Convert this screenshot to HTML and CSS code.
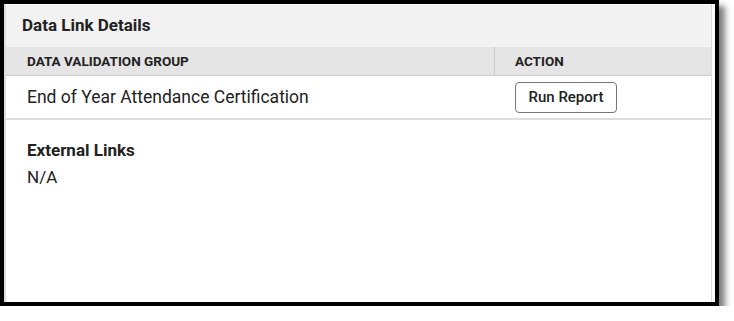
FILE: index.html
```html
<!DOCTYPE html>
<html lang="en">
<head>
  <meta charset="UTF-8" />
  <title>Data Link Details</title>
  <link rel="stylesheet" href="styles.css">
</head>
<body>
  <div class="frame">
    <div class="panel">
      <div class="panel-title">Data Link Details</div>
      <div class="grid-head">
        <div class="col-group">DATA VALIDATION GROUP</div>
        <div class="col-action">ACTION</div>
      </div>
      <div class="grid-row">
        <div class="col-group">End of Year Attendance Certification</div>
        <div class="col-action"><button class="btn">Run Report</button></div>
      </div>
      <div class="links">
        <h3>External Links</h3>
        <p>N/A</p>
      </div>
    </div>
    <div class="edge"></div>
  </div>
</body>
</html>
```

FILE: styles.css
```css
* {
  margin: 0;
  padding: 0;
  box-sizing: border-box;
}
body {
  font-family: Roboto, 'Liberation Sans', sans-serif;
  background: #fff;
  color: #222;
}
.frame {
  width: 719px;
  height: 306px;
  border: 4px solid #000;
  display: flex;
  box-shadow: 6px 6px 6px rgba(0, 0, 0, 0.5);
  background: #fff;
}
.panel {
  flex: 1;
  border-left: 2px solid #ddd;
}
.edge {
  width: 4px;
  border-left: 1px solid #ddd;
}
.panel-title {
  height: 43px;
  border-top: 1px solid #fff;
  background: #f2f2f2;
  padding: 10px 16px 0;
  font-size: 17px;
  font-weight: 700;
}
.grid-head {
  display: flex;
  height: 29px;
  background: #e5e5e5;
  border-bottom: 1px solid #ccc;
  font-size: 13.5px;
  font-weight: 700;
  align-items: stretch;
}
.grid-head .col-group {
  border-right: 1px solid #ccc;
}
.col-group {
  width: 489px;
  padding-left: 21px;
  display: flex;
  align-items: center;
}
.col-action {
  flex: 1;
  padding-left: 20px;
  display: flex;
  align-items: center;
}
.grid-row {
  display: flex;
  height: 44px;
  border-bottom: 2px solid #ddd;
  font-size: 17.5px;
}
.btn {
  font-family: inherit;
  font-size: 15px;
  font-weight: 500;
  color: #222;
  background: #fff;
  border: 1px solid #777;
  border-radius: 4px;
  width: 102px;
  height: 31px;
}
.links {
  padding: 19px 21px;
}
.links h3 {
  font-size: 17px;
  font-weight: 700;
  line-height: 22px;
}
.links p {
  font-size: 17px;
  line-height: 24px;
  margin-top: 4px;
}
```
